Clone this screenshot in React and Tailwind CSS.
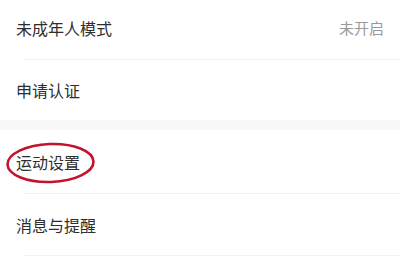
const font = { fontFamily: '"Noto Sans CJK SC", "Noto Sans", sans-serif' };

const Row = ({ label, value, line = true, h = 'h-[62px]', children }) => (
  <div className={`relative flex items-center justify-between px-4 ${h}`}>
    <span className="text-[16px] text-[#2e2e2e]">{label}</span>
    {value && <span className="text-[15px] text-[#9a9a9a]">{value}</span>}
    {line && <div className="absolute bottom-0 left-6 right-0 h-px bg-[#f1f1f1]" />}
    {children}
  </div>
);

export default function App() {
  return (
    <div className="h-[260px] w-[400px] overflow-hidden bg-white" style={font}>
      <div className="-mt-[4px]">
        <Row label="未成年人模式" value="未开启" h="h-[64px]" />
        <Row label="申请认证" line={false} h="h-[60px]" />
      </div>
      <div className="h-[10px] bg-[#f8f8f8]" />
      <Row label="运动设置" h="h-[64px]">
        <svg className="absolute left-0 top-0" width="110" height="64" viewBox="0 0 110 64">
          <ellipse cx="50.5" cy="33" rx="43" ry="19" fill="none" stroke="#c4132c" strokeWidth="2.6" transform="rotate(-2 50.5 33)" />
        </svg>
      </Row>
      <Row label="消息与提醒" />
    </div>
  );
}
